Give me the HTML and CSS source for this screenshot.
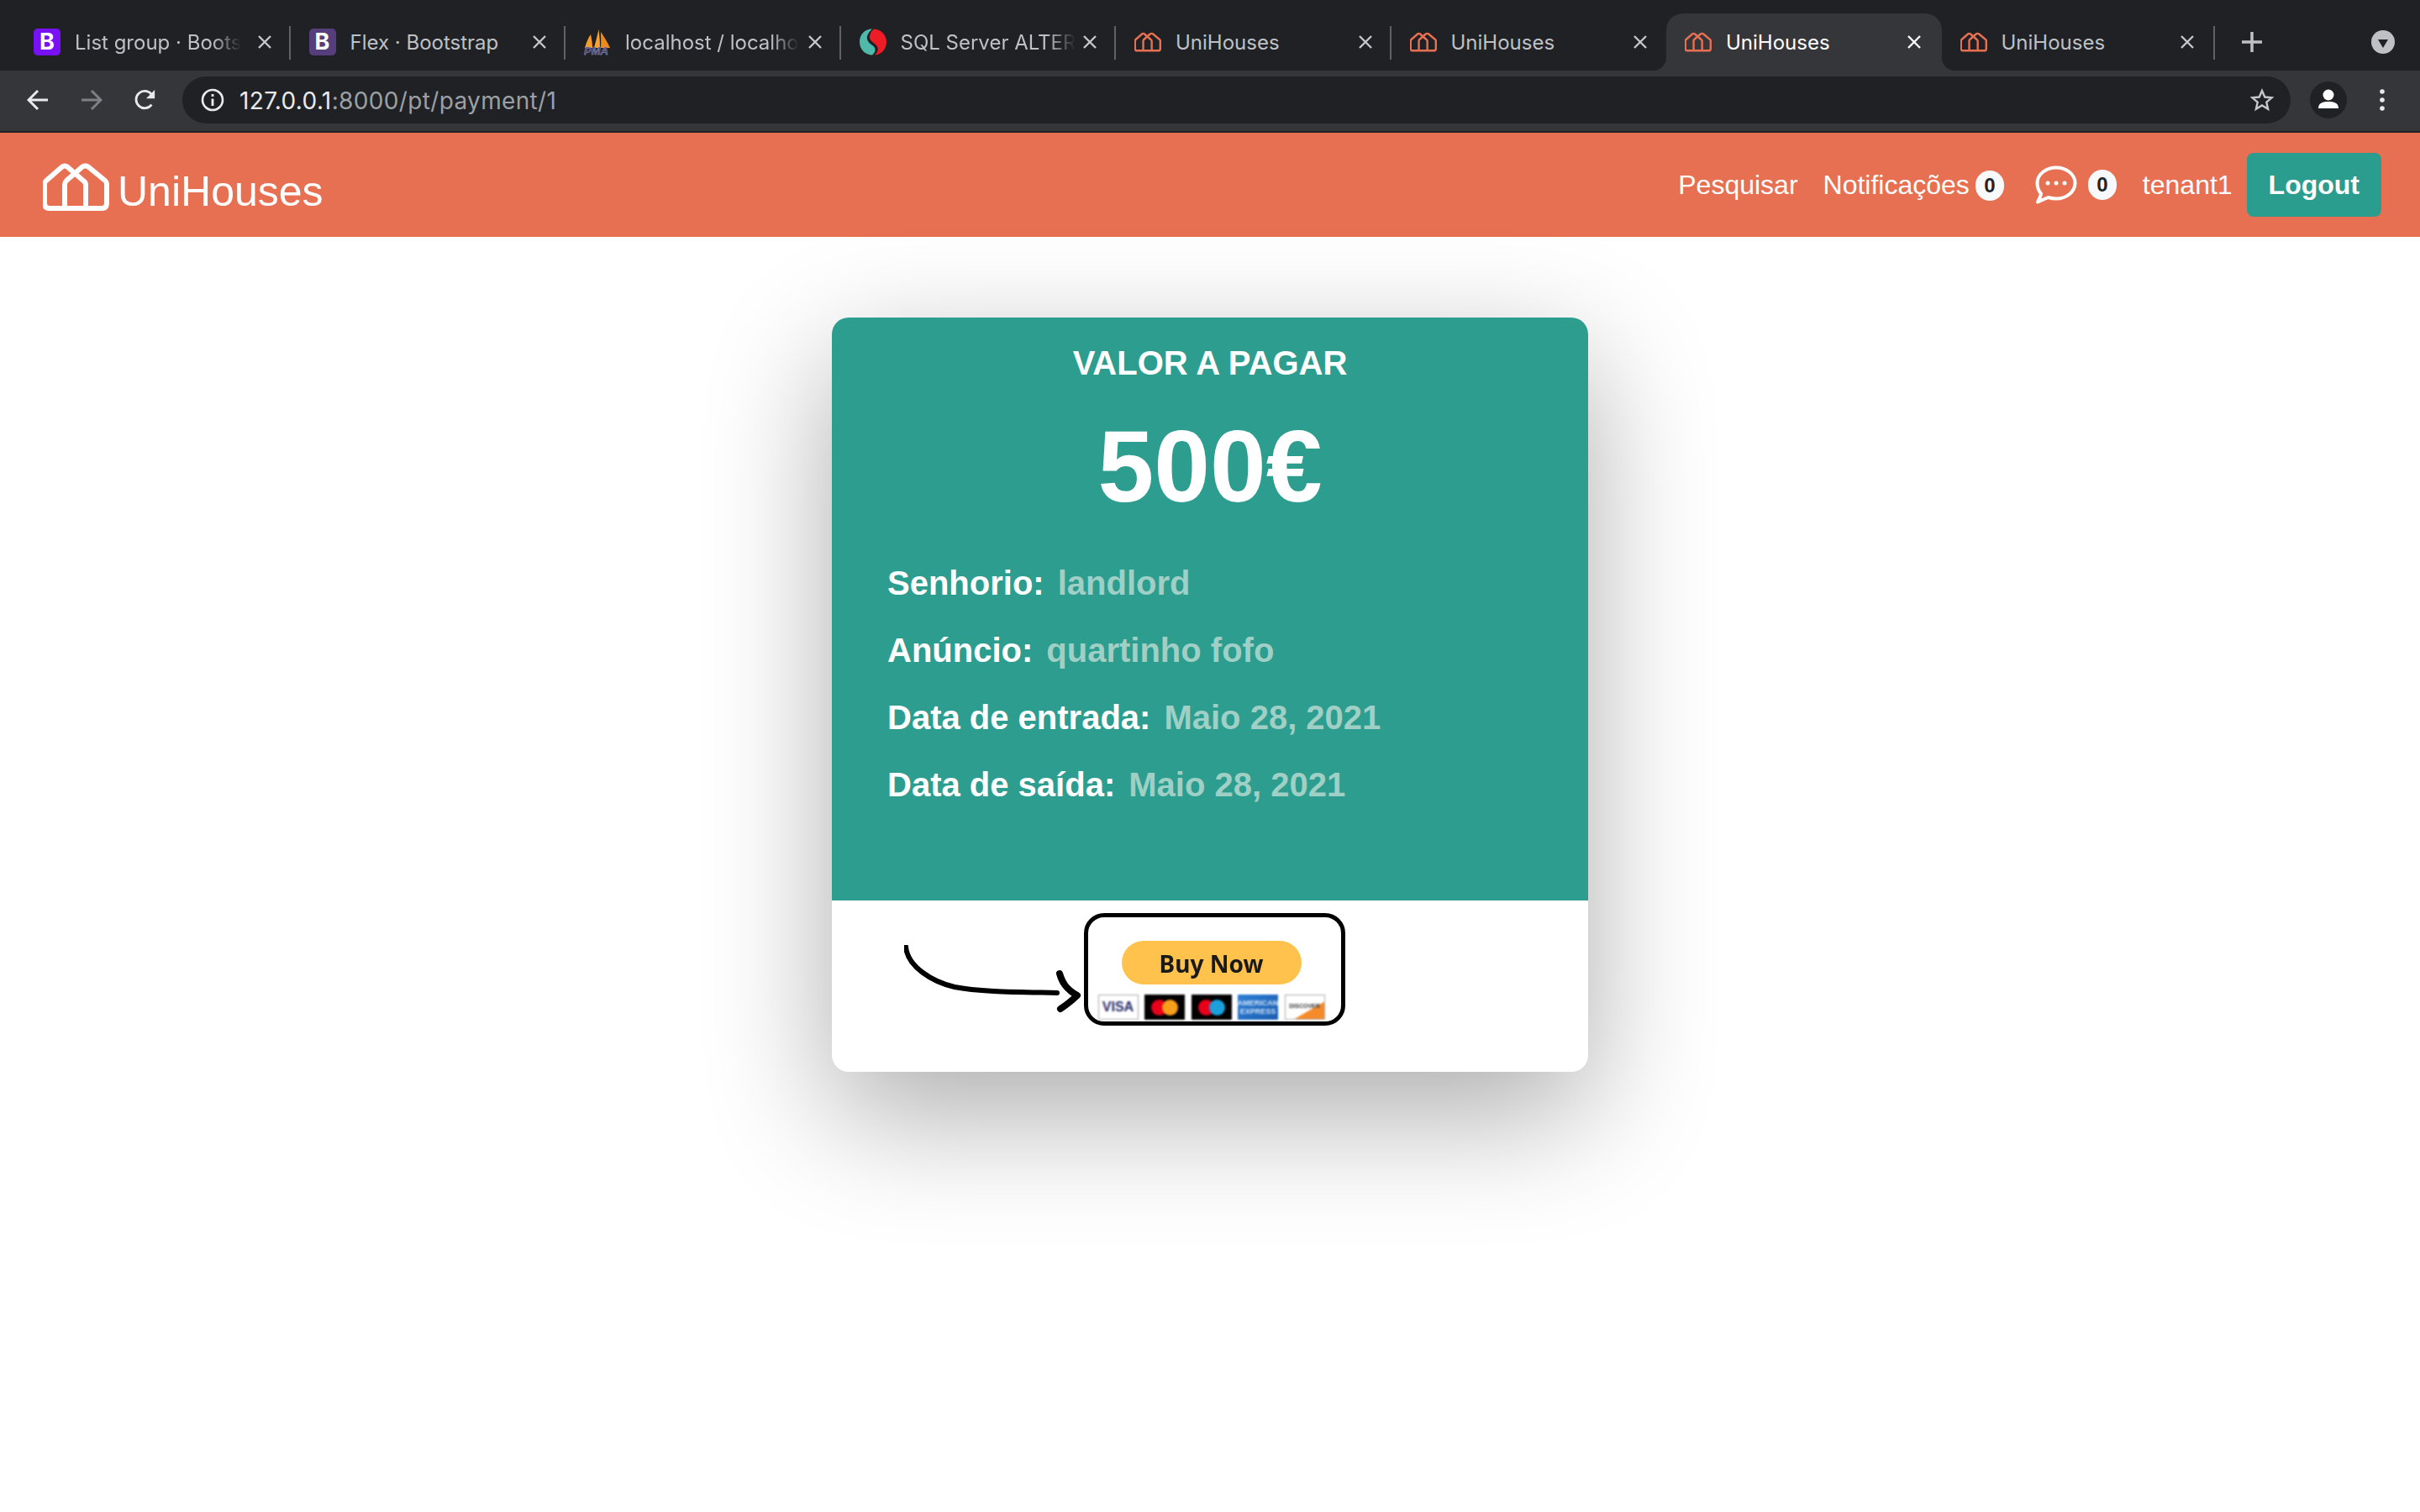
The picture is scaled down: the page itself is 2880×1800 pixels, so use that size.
FILE: index.html
```html
<!DOCTYPE html>
<html lang="en">
<head>
    <meta charset="UTF-8">
    <title>UniHouses</title>
    <link rel="stylesheet" href="styles.css">
</head>
<body>
<svg class="defs" width="0" height="0">
    <symbol id="house" viewBox="0 0 79 57">
        <g fill="none" stroke="currentColor" stroke-width="6" stroke-linejoin="round">
            <path d="M2 48V25Q2 23 4 21L23 4.500Q26 2.500 29 4.500L48 21Q51 23 51 26V54"/>
            <path d="M26 54V26Q26 23 28 21L47 4.500Q50.500 2.500 54 4.500L74 21Q76 23 76 25V48Q76 54 70 54H8Q2 54 2 48"/>
        </g>
    </symbol>
    <symbol id="close" viewBox="0 0 16 16">
        <path d="M1 1L15 15M15 1L1 15" fill="none" stroke="currentColor" stroke-width="2.400"/>
    </symbol>
</svg>

<div class="tabstrip">
    <div class="tab">
        <span class="fav fav-bs">B</span>
        <span class="tab-title fade">List group · Boots</span>
        <svg class="tab-x"><use href="#close"/></svg>
    </div>
    <div class="tab">
        <span class="fav fav-bs2">B</span>
        <span class="tab-title">Flex · Bootstrap</span>
        <svg class="tab-x"><use href="#close"/></svg>
    </div>
    <div class="tab">
        <svg class="fav fav-open" viewBox="0 0 32 32">
            <path d="M1 23C3 16 5 11 8 7C9 12 10 18 10 23Z" fill="#f89c28"/>
            <path d="M12 23C14 15 16 8 17.500 1C18.500 8 19 16 19 23Z" fill="#f7a233"/>
            <path d="M20 23C20.500 16 20 10 20 4C24 10 28 16 31 23Z" fill="#ee8a1c"/>
            <text x="0" y="31" class="pma">PMA</text>
        </svg>
        <span class="tab-title fade">localhost / localho</span>
        <svg class="tab-x"><use href="#close"/></svg>
    </div>
    <div class="tab">
        <svg class="fav" viewBox="0 0 32 32">
            <path d="M15 .5C6 .5 0 7 0 16C0 25 7 31.500 15 31.500C19 28 20 24 16 20.500C11 17 8 14 9 9C10 6 12 3 15 .5Z" fill="#4fb9ab"/>
            <path d="M17 .5C26 1 32 8 32 16C32 25 25 31.500 18 31.500C22 28 23.500 23 19 19C14 15 11.500 13 12 9C12.500 6 14 3 17 .5Z" fill="#ee1c25"/>
        </svg>
        <span class="tab-title fade">SQL Server ALTER</span>
        <svg class="tab-x"><use href="#close"/></svg>
    </div>
    <div class="tab">
        <svg class="fav fav-house"><use href="#house"/></svg>
        <span class="tab-title">UniHouses</span>
        <svg class="tab-x"><use href="#close"/></svg>
    </div>
    <div class="tab no-sep">
        <svg class="fav fav-house"><use href="#house"/></svg>
        <span class="tab-title">UniHouses</span>
        <svg class="tab-x"><use href="#close"/></svg>
    </div>
    <div class="tab active">
        <svg class="fav fav-house"><use href="#house"/></svg>
        <span class="tab-title">UniHouses</span>
        <svg class="tab-x"><use href="#close"/></svg>
    </div>
    <div class="tab tab-last">
        <svg class="fav fav-house"><use href="#house"/></svg>
        <span class="tab-title">UniHouses</span>
        <svg class="tab-x"><use href="#close"/></svg>
    </div>
    <svg class="newtab" viewBox="0 0 24 24"><path d="M12 0V24M0 12H24" stroke="#bdc1c6" stroke-width="3.500" fill="none"/></svg>
    <div class="tabsearch"><svg viewBox="0 0 28 28"><path d="M8 11H20L14 21Z" fill="#202124"/></svg></div>
</div>

<div class="toolbar">
    <svg class="tool" viewBox="0 0 26 26"><path d="M25 13H3M13 2L2 13L13 24" fill="none" stroke="#e8eaed" stroke-width="3"/></svg>
    <svg class="tool" viewBox="0 0 26 26"><path d="M1 13H23M13 2L24 13L13 24" fill="none" stroke="#7d8084" stroke-width="3"/></svg>
    <svg class="tool" viewBox="0 0 28 28"><path d="M22 20A11 11 0 1 1 22 7" fill="none" stroke="#e8eaed" stroke-width="3"/><path d="M26 1V12H15Z" fill="#e8eaed"/></svg>
    <div class="omnibox">
        <svg class="info" viewBox="0 0 28 28"><circle cx="14" cy="14" r="12" fill="none" stroke="#e8eaed" stroke-width="2.600"/><path d="M14 12.500V21M14 7V10" stroke="#e8eaed" stroke-width="2.800"/></svg>
        <span class="url">127.0.0.1<span class="url-rest">:8000/pt/payment/1</span></span>
        <svg class="star" viewBox="0 0 28 28"><path d="M14 3L17.300 10.500L25.500 11.300L19.300 16.700L21.100 24.700L14 20.500L6.900 24.700L8.700 16.700L2.500 11.300L10.700 10.500Z" fill="none" stroke="#c4c7cb" stroke-width="2.400"/></svg>
    </div>
    <div class="avatar"><svg viewBox="0 0 44 44"><circle cx="22" cy="16" r="6.500" fill="#fff"/><path d="M10 32C10 25 16 24 22 24S34 25 34 32Z" fill="#fff"/></svg></div>
    <svg class="menu" viewBox="0 0 6 26"><circle cx="3" cy="3" r="2.800" fill="#e8eaed"/><circle cx="3" cy="13" r="2.800" fill="#e8eaed"/><circle cx="3" cy="23" r="2.800" fill="#e8eaed"/></svg>
</div>

<nav class="navbar">
    <a class="brand">
        <svg class="brand-logo"><use href="#house"/></svg>
        <span class="brand-name">UniHouses</span>
    </a>
    <div class="nav-right">
        <a class="nav-link">Pesquisar</a>
        <a class="nav-link">Notificações<span class="badge badge-notif">0</span></a>
        <svg class="chat" viewBox="0 0 50 46">
            <path d="M25 2.500C37 2.500 47.500 10.500 47.500 21C47.500 31.500 37 39.500 25 39.500C21.500 39.500 18.500 39 15.500 38L3 43.500C5 40 6.500 37 7 33.500C4 30 2.500 26 2.500 21C2.500 10.500 13 2.500 25 2.500Z" fill="none" stroke="#fff" stroke-width="4" stroke-linejoin="round"/>
            <circle cx="15" cy="21" r="2.500" fill="#fff"/><circle cx="25" cy="21" r="2.500" fill="#fff"/><circle cx="35" cy="21" r="2.500" fill="#fff"/>
        </svg>
        <span class="badge badge-chat">0</span>
        <a class="nav-link nav-user">tenant1</a>
        <a class="btn-logout">Logout</a>
    </div>
</nav>

<div class="card">
    <div class="card-top">
        <h5 class="card-label">VALOR A PAGAR</h5>
        <h1 class="card-price">500€</h1>
        <p class="row"><span class="row-key">Senhorio:</span><span class="row-val">landlord</span></p>
        <p class="row"><span class="row-key">Anúncio:</span><span class="row-val">quartinho fofo</span></p>
        <p class="row"><span class="row-key">Data de entrada:</span><span class="row-val">Maio 28, 2021</span></p>
        <p class="row"><span class="row-key">Data de saída:</span><span class="row-val">Maio 28, 2021</span></p>
    </div>
    <div class="card-bottom">
        <svg class="arrow" viewBox="0 0 212 90">
            <path d="M2 2C4 26 34 44 60 50C90 56 138 56 182 57" fill="none" stroke="#000" stroke-width="6" stroke-linecap="round"/>
            <path d="M185 34C188 44 192 52 206 60C198 68 192 72 186 76" fill="none" stroke="#000" stroke-width="8" stroke-linecap="round" stroke-linejoin="round"/>
        </svg>
        <div class="paybox">
            <div class="buy-btn">Buy Now</div>
            <div class="paycards">
                <span class="paycard pc-visa">VISA</span>
                <span class="paycard pc-black"><i class="disc d-red"></i><i class="disc d-orange"></i></span>
                <span class="paycard pc-black"><i class="disc d-red"></i><i class="disc d-blue"></i></span>
                <span class="paycard pc-amex">AMERICAN EXPRESS</span>
                <span class="paycard pc-disc">DISCOVER</span>
            </div>
        </div>
    </div>
</div>
</body>
</html>
```

FILE: styles.css
```css
*{ margin:0; padding:0; box-sizing:border-box;}
body{
    background:#fff;
    font-family:"Liberation Sans",Arial,sans-serif;
    min-height:1800px;
}
.defs{ display:block;}

/* browser chrome */
.tabstrip{
    height:84px;
    background:#202124;
    display:flex;
    align-items:flex-end;
    padding-left:18px;
    font-family:Inter,"Noto Sans",sans-serif;
}
.tab{
    width:327.5px;
    height:68px;
    padding:0 23px 0 22px;
    display:flex;
    align-items:center;
    position:relative;
    color:#bdc1c6;
    font-size:24px;
}
.tab:after{
    content:"";
    position:absolute;
    right:0;
    top:15px;
    width:2px;
    height:40px;
    background:#5f6368;
}
.tab.no-sep:after{ display:none;}
.tab.active{
    background:#35363a;
    border-radius:20px 20px 0 0;
    color:#fff;
    padding-right:25px;
}
.tab.active:before,.tab.active:after{
    content:"";
    position:absolute;
    top:auto;
    bottom:0;
    width:16px;
    height:16px;
}
.tab.active:before{
    left:-16px;
    background:radial-gradient(circle at 0 0,#202124 16px,#35363a 16.500px);
}
.tab.active:after{
    right:-16px;
    background:radial-gradient(circle at 100% 0,#202124 16px,#35363a 16.500px);
}
.tab.active .tab-x{ color:#fff;}
.tab-last{
    width:325px;
    padding-right:25px;
}
.fav{
    width:32px;
    height:32px;
    flex:none;
    margin-right:17px;
    border-radius:5px;
    color:#fff;
    font-weight:700;
    font-size:27px;
    line-height:32px;
    text-align:center;
}
.fav-open{ overflow:visible;}
.fav-bs{ background:#7811f5;}
.fav-bs2{ background:#563d7c;}
.fav-house{ color:#e87052;}
.pma{
    font:italic 700 13px "Liberation Sans",sans-serif;
    fill:#3f3f80;
    stroke:#a9a9c8;
    stroke-width:.4px;
}
.tab-title{ white-space:nowrap;}
.tab-title.fade{
    -webkit-mask-image:linear-gradient(to right,#000 calc(100% - 34px),transparent);
    mask-image:linear-gradient(to right,#000 calc(100% - 34px),transparent);
}
.tab-x{
    width:16px;
    height:16px;
    flex:none;
    margin-left:auto;
    color:#c4c7cb;
}
.newtab{
    width:24px;
    height:24px;
    margin:0 0 22px 32px;
}
.tabsearch{
    width:28px;
    height:28px;
    border-radius:50%;
    background:#bdc1c6;
    margin:0 0 20px 130px;
}
.toolbar{
    height:74px;
    background:#35363a;
    border-bottom:2px solid #202124;
    display:flex;
    align-items:center;
    padding:0 32px 2px 32px;
}
.tool{
    width:26px;
    height:26px;
    flex:none;
    margin-right:38px;
}
.omnibox{
    flex:1;
    height:56px;
    margin-left:-7px;
    background:#202124;
    border-radius:28px;
    display:flex;
    align-items:center;
    padding:0 20px 0 22px;
    font-family:Inter,"Noto Sans",sans-serif;
    font-size:28px;
    letter-spacing:.35px;
    color:#e8eaed;
}
.info{
    width:28px;
    height:28px;
    flex:none;
    margin-right:18px;
}
.url{
    flex:1;
    padding-top:2px;
}
.url-rest{ color:#9aa0a6;}
.star{
    width:28px;
    height:28px;
    flex:none;
}
.avatar{
    width:44px;
    height:44px;
    flex:none;
    border-radius:50%;
    background:#202124;
    margin-left:23px;
}
.menu{
    width:6px;
    height:26px;
    flex:none;
    margin:0 10px 0 39px;
}

/* page navbar */
.navbar{
    height:124px;
    background:#e87052;
    display:flex;
    align-items:center;
    justify-content:space-between;
    padding:0 46px 0 51px;
    color:#fff;
}
.brand{
    display:flex;
    align-items:flex-end;
    padding-top:4px;
}
.brand-logo{
    width:79px;
    height:57px;
}
.brand-name{
    font-size:50px;
    line-height:50px;
    margin:0 0 -2px 10px;
}
.nav-right{
    display:flex;
    align-items:center;
}
.nav-link{
    font-size:32px;
    display:flex;
    align-items:center;
    margin-left:30px;
}
.badge{
    width:34px;
    height:36px;
    background:#f8f9fa;
    color:#212529;
    border-radius:18px;
    font-size:24px;
    font-weight:700;
    line-height:36px;
    text-align:center;
    flex:none;
}
.badge-notif{ margin:2px 0 0 7px;}
.chat{
    width:50px;
    height:46px;
    margin-left:37px;
    flex:none;
}
.badge-chat{ margin-left:13px;}
.nav-user{ margin:0 17px 0 31px;}
.btn-logout{
    height:76px;
    padding:0 26px;
    background:#2a9d8f;
    border-radius:8px;
    font-size:32px;
    font-weight:700;
    line-height:76px;
}

/* payment card */
.card{
    width:900px;
    height:898px;
    margin:96px auto 0;
    background:#fff;
    border-radius:20px;
    overflow:hidden;
    box-shadow:0 50px 150px rgba(0,0,0,.33);
}
.card-top{
    height:694px;
    background:#2d9d8f;
    padding:30px 66px 0;
    color:#fff;
}
.card-label{
    font-size:40px;
    line-height:48px;
    text-align:center;
}
.card-price{
    font-size:120px;
    line-height:144px;
    text-align:center;
    margin:27px 0 43px;
}
.row{
    font-size:40px;
    line-height:48px;
    font-weight:700;
    margin-bottom:32px;
}
.row-val{
    color:#9fcfc5;
    margin-left:16px;
}
.card-bottom{
    display:flex;
    align-items:flex-start;
    padding:15px 0 0 86px;
}
.arrow{
    width:212px;
    height:90px;
    flex:none;
    margin:38px 2px 0 0;
}
.paybox{
    width:311px;
    height:134px;
    border:5px solid #000;
    border-radius:24px;
    display:flex;
    flex-direction:column;
    align-items:center;
    padding:28px 8px 0 0;
}
.buy-btn{
    width:214px;
    height:52px;
    padding-top:1px;
    background:#ffc34d;
    border-radius:26px;
    color:#1a1a1a;
    font-family:"Noto Sans",sans-serif;
    font-size:28px;
    font-weight:700;
    line-height:52px;
    text-align:center;
    filter:blur(.5px);
}
.paycards{
    display:flex;
    gap:7.500px;
    margin-top:12px;
    filter:blur(.8px);
}
.paycard{
    width:48px;
    height:30px;
    display:flex;
    align-items:center;
    justify-content:center;
    overflow:hidden;
    font-weight:700;
}
.pc-visa{
    background:#fff;
    border:1px solid #aaa;
    color:#2e2f6e;
    font-size:16px;
}
.pc-black{ background:#000;}
.disc{
    width:19px;
    height:19px;
    border-radius:50%;
    display:block;
}
.d-red{ background:#eb001b;}
.d-orange{ background:#f79e1b; margin-left:-6px;}
.d-blue{ background:#1ba0dc; margin-left:-6px;}
.pc-amex{
    background:linear-gradient(135deg,#2d7fd6,#1c5db0);
    color:#cfe3f7;
    font-size:9px;
    line-height:10px;
    text-align:center;
}
.pc-disc{
    background:linear-gradient(150deg,#fff 62%,#f58a2a 63%);
    border:1px solid #aaa;
    color:#333;
    font-size:7px;
    padding-bottom:4px;
}
```
